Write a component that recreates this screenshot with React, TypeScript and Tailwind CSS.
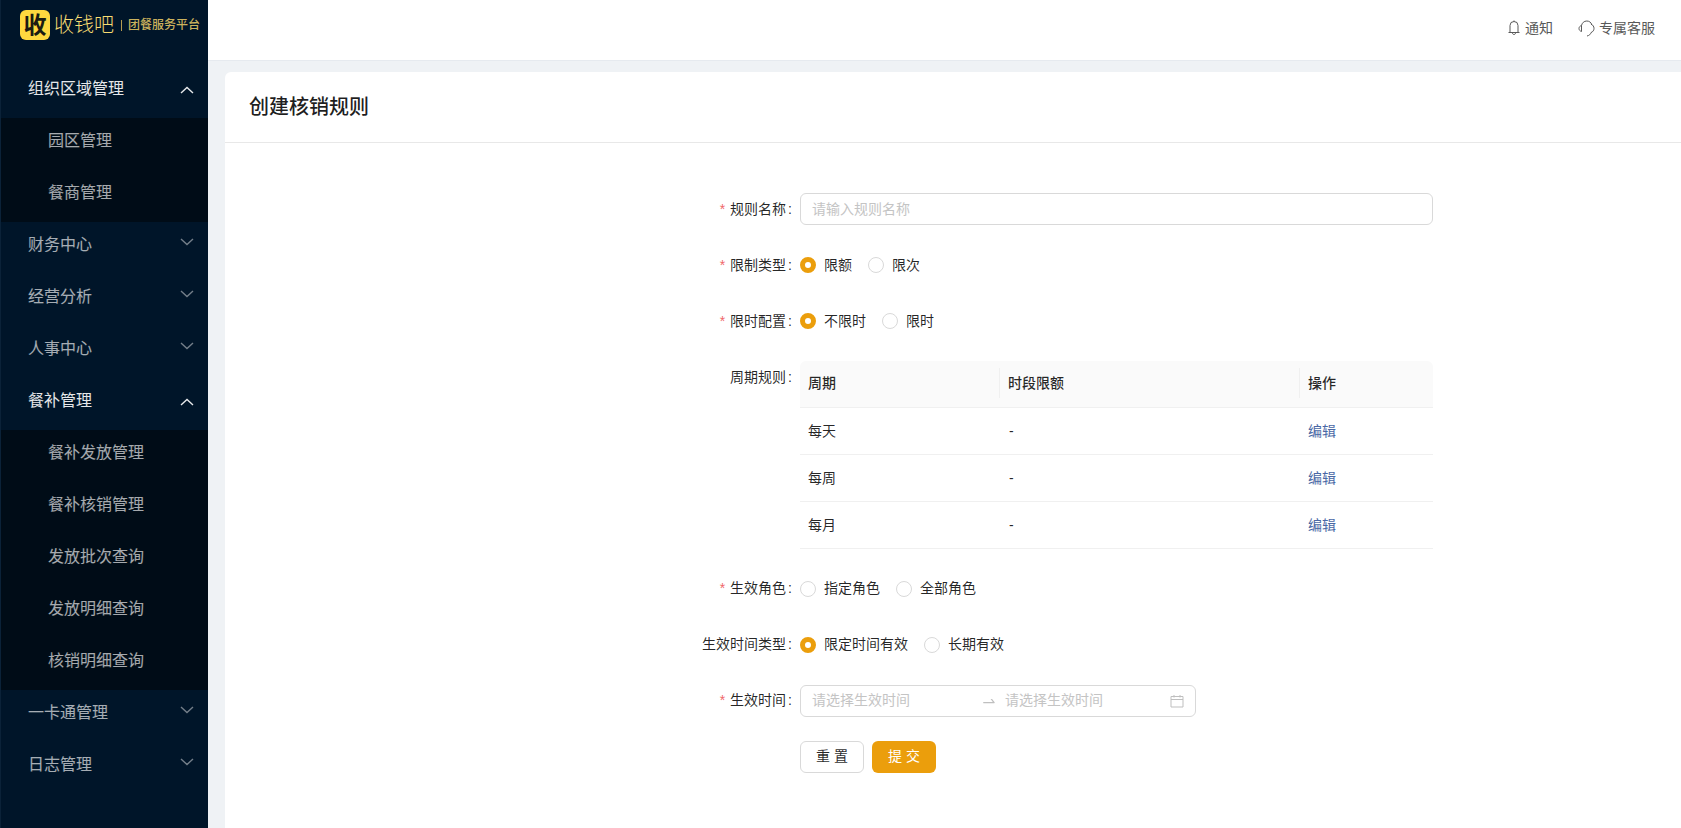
import { AiOutlineSwapRight } from 'react-icons/ai'

const font = "font-['Liberation_Sans','Noto_Sans_CJK_SC',sans-serif]"

const menu = [
  { label: '组织区域管理', open: true, children: ['园区管理', '餐商管理'] },
  { label: '财务中心' },
  { label: '经营分析' },
  { label: '人事中心' },
  { label: '餐补管理', open: true, children: ['餐补发放管理', '餐补核销管理', '发放批次查询', '发放明细查询', '核销明细查询'] },
  { label: '一卡通管理' },
  { label: '日志管理' },
]

const rows = ['每天', '每周', '每月']

function Chevron({ up }: { up?: boolean }) {
  return (
    <svg width="14" height="8" viewBox="0 0 14 8" fill="none" className={up ? 'text-white/90 mt-1' : 'text-white/45 -mt-1'}>
      <path d={up ? 'M1 7L7 1.5L13 7' : 'M1 1L7 6.5L13 1'} stroke="currentColor" strokeWidth="1.4" />
    </svg>
  )
}

function Sidebar() {
  return (
    <aside className="w-[208px] h-[828px] shrink-0 bg-[#001529] border-l border-[#0b2238] overflow-hidden">
      <div className="h-[66px] pl-[19px] pt-[10px] flex items-start">
        <div className="w-[30px] h-[30px] rounded-[6px] bg-[#ffd83f] flex items-center justify-center text-[23px] leading-none font-bold text-[#1b1b12]">
          收
        </div>
        <span className="ml-[4px] w-[60px] text-[20px] leading-[30px] font-light text-[#f7dc72] whitespace-nowrap">收钱吧</span>
        <span className="ml-[7px] mr-[6px] mt-[10px] w-px h-[11px] bg-[#b59c50]" />
        <span className="text-[12px] leading-[30px] font-medium text-[#cbb25d] whitespace-nowrap">团餐服务平台</span>
      </div>
      {menu.map((item) => (
        <div key={item.label}>
          <div className={`h-[44px] mb-[8px] pl-[27px] pr-[14px] flex items-center justify-between text-[16px] ${item.open ? 'text-white/90' : 'text-white/65'}`}>
            <span className="pt-[2px]">{item.label}</span>
            <Chevron up={item.open} />
          </div>
          {item.children && (
            <div className="bg-[#000c17] flex flex-col">
              {item.children.map((child) => (
                <div key={child} className="h-[44px] mb-[8px] pl-[47px] pt-[2px] flex items-center text-[16px] text-white/65">
                  {child}
                </div>
              ))}
            </div>
          )}
        </div>
      ))}
    </aside>
  )
}

function Label({ text, required }: { text: string; required?: boolean }) {
  return (
    <div className="w-[575px] shrink-0 pr-[7px] h-8 flex items-center justify-end text-[14px] text-[#000000d9]">
      {required && <span className="mr-[5px] text-[#f0686a]">*</span>}
      <span>{text}</span>
      <span className="ml-[2px] mr-px">:</span>
    </div>
  )
}

function Radio({ label, checked }: { label: string; checked?: boolean }) {
  return (
    <div className="flex items-center mr-[16px] text-[14px] text-[#000000d9]">
      {checked ? (
        <span className="w-4 h-4 rounded-full border-[5px] border-[#eb9e0c] bg-white" />
      ) : (
        <span className="w-4 h-4 rounded-full border border-[#d9d9d9] bg-white" />
      )}
      <span className="ml-[8px]">{label}</span>
    </div>
  )
}

function RadioRow({ label, required, options }: { label: string; required?: boolean; options: { label: string; checked?: boolean }[] }) {
  return (
    <div className="flex">
      <Label text={label} required={required} />
      <div className="h-8 flex items-center">
        {options.map((o) => (
          <Radio key={o.label} label={o.label} checked={o.checked} />
        ))}
      </div>
    </div>
  )
}

function HeadCell({ text, divider, className }: { text: string; divider?: boolean; className: string }) {
  return (
    <th className={`relative text-left font-medium border-b border-[#f0f0f0] ${className}`}>
      {text}
      {divider && <span className="absolute left-0 top-[7px] bottom-[9px] w-px bg-[#f0f0f0]" />}
    </th>
  )
}

function RuleTable() {
  return (
    <table className="w-[633px] table-fixed text-[14px] text-[#000000d9]">
      <thead>
        <tr className="h-[46px] bg-[#fafafa]">
          <HeadCell text="周期" className="w-[199px] pl-2 rounded-tl-[6px]" />
          <HeadCell text="时段限额" divider className="w-[300px] pl-[9px]" />
          <HeadCell text="操作" divider className="pl-[9px] rounded-tr-[6px]" />
        </tr>
      </thead>
      <tbody>
        {rows.map((row) => (
          <tr key={row} className="h-[47px]">
            <td className="pl-2 pt-px border-b border-[#f0f0f0]">{row}</td>
            <td className="pl-[10px] pt-px border-b border-[#f0f0f0]">-</td>
            <td className="pl-[9px] pt-px border-b border-[#f0f0f0] text-[#4a68a5]">编辑</td>
          </tr>
        ))}
      </tbody>
    </table>
  )
}

function RuleForm() {
  return (
    <div className="pt-[50px] flex flex-col gap-6">
      <div className="flex">
        <Label text="规则名称" required />
        <div className="w-[633px] h-8 border border-[#d9d9d9] rounded-[6px] pl-[11px] flex items-center text-[14px] text-[#c4c4c4]">
          请输入规则名称
        </div>
      </div>
      <RadioRow label="限制类型" required options={[{ label: '限额', checked: true }, { label: '限次' }]} />
      <RadioRow label="限时配置" required options={[{ label: '不限时', checked: true }, { label: '限时' }]} />
      <div className="flex">
        <Label text="周期规则" />
        <RuleTable />
      </div>
      <RadioRow label="生效角色" required options={[{ label: '指定角色' }, { label: '全部角色' }]} />
      <RadioRow label="生效时间类型" options={[{ label: '限定时间有效', checked: true }, { label: '长期有效' }]} />
      <div className="flex">
        <Label text="生效时间" required />
        <div className="w-[396px] h-8 border border-[#d9d9d9] rounded-[6px] pl-[11px] pr-[11px] flex items-center text-[14px] text-[#c4c4c4]">
          <span className="w-[169px]">请选择生效时间</span>
          <AiOutlineSwapRight className="w-4 h-4 text-[#bfbfbf]" />
          <span className="ml-[8px] flex-1">请选择生效时间</span>
          <svg width="14" height="14" viewBox="0 0 14 14" fill="none" stroke="#bfbfbf" strokeWidth="1">
            <path d="M1 2.5h12v10.5H1zM1 5.5h12M4 1v2.5M10 1v2.5" />
          </svg>
        </div>
      </div>
      <div className="flex pl-[575px] gap-2">
        <button className="w-16 h-8 border border-[#d9d9d9] rounded-[6px] bg-white text-[14px] text-[#000000d9]">重 置</button>
        <button className="w-16 h-8 rounded-[6px] bg-[#eb9e0c] text-[14px] text-white">提 交</button>
      </div>
    </div>
  )
}

export default function App() {
  return (
    <div className={`${font} w-[1681px] h-[828px] flex overflow-hidden bg-[#eff2f5]`}>
      <Sidebar />
      <div className="flex-1 flex flex-col min-w-0">
        <header className="h-[60px] shrink-0 bg-white shadow-[0_1px_0_#e6eaef] pb-[4px] flex items-center justify-end pr-[26px] gap-[25px] text-[14px] text-[#595959]">
          <div className="flex items-center gap-[5px]">
            <svg width="12" height="16" viewBox="0 0 12 16" fill="none" stroke="currentColor" strokeWidth="1">
              <path d="M2 12.5V5.5a4 4 0 0 1 8 0v7M.5 12.5h11M6 .5v1M4.5 13c0 2 3 2 3 0" />
            </svg>
            <span>通知</span>
          </div>
          <div className="flex items-center gap-[4px]">
            <svg width="17" height="17" viewBox="0 0 17 17" fill="none" stroke="currentColor" strokeWidth="1">
              <path d="M3.5 5.5C4 3 6 1 8.8 1c2.4 0 4.2 1.4 5 3.5" />
              <path d="M3.5 5.5C1.8 6 1 7.2 1 8.5s.8 2.5 2.5 3V5.5z" />
              <path d="M13 4.2C15 5 16 6.6 16 8.4c0 1.8-1 3.4-3 4.2-.4 1.6-1.8 3-4 3.4" />
            </svg>
            <span>专属客服</span>
          </div>
        </header>
        <main className="ml-[17px] mt-[12px] flex-1 bg-white rounded-tl-[6px]">
          <div className="h-[71px] pl-[24px] flex items-center border-b border-[#e8e8e8] text-[20px] font-medium text-[#000000e0]">
            创建核销规则
          </div>
          <RuleForm />
        </main>
      </div>
    </div>
  )
}
